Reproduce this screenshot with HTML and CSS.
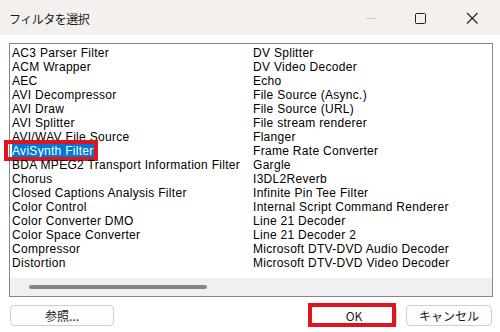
FILE: index.html
```html
<!DOCTYPE html>
<html lang="ja">
<head>
<meta charset="utf-8">
<link rel="stylesheet" href="styles.css">
</head>
<body>
<div class="window">
  <div class="titlebar">
    <span class="title">フィルタを選択</span>
    <div class="controls">
      <svg class="ctl" width="46" height="35" viewBox="0 0 46 35"><line x1="18" y1="18.5" x2="28" y2="18.5" stroke="#c9c9c9" stroke-width="1"/></svg>
      <svg class="ctl" width="46" height="35" viewBox="0 0 46 35"><rect x="16.5" y="13.5" width="10" height="10" rx="1" fill="none" stroke="#222" stroke-width="1"/></svg>
      <svg class="ctl" width="46" height="35" viewBox="0 0 46 35"><path d="M17 13 L27.5 23.5 M27.5 13 L17 23.5" stroke="#222" stroke-width="1.1"/></svg>
    </div>
  </div>
  <div class="body">
    <div class="listbox">
      <div class="list">
        <div class="item">AC3 Parser Filter</div>
        <div class="item">ACM Wrapper</div>
        <div class="item">AEC</div>
        <div class="item">AVI Decompressor</div>
        <div class="item">AVI Draw</div>
        <div class="item">AVI Splitter</div>
        <div class="item">AVI/WAV File Source</div>
        <div class="item"><span class="sel">AviSynth Filter</span><span class="mark mark-sel"></span></div>
        <div class="item">BDA MPEG2 Transport Information Filter</div>
        <div class="item">Chorus</div>
        <div class="item">Closed Captions Analysis Filter</div>
        <div class="item">Color Control</div>
        <div class="item">Color Converter DMO</div>
        <div class="item">Color Space Converter</div>
        <div class="item">Compressor</div>
        <div class="item">Distortion</div>
        <div class="item">DV Splitter</div>
        <div class="item">DV Video Decoder</div>
        <div class="item">Echo</div>
        <div class="item">File Source (Async.)</div>
        <div class="item">File Source (URL)</div>
        <div class="item">File stream renderer</div>
        <div class="item">Flanger</div>
        <div class="item">Frame Rate Converter</div>
        <div class="item">Gargle</div>
        <div class="item">I3DL2Reverb</div>
        <div class="item">Infinite Pin Tee Filter</div>
        <div class="item">Internal Script Command Renderer</div>
        <div class="item">Line 21 Decoder</div>
        <div class="item">Line 21 Decoder 2</div>
        <div class="item">Microsoft DTV-DVD Audio Decoder</div>
        <div class="item">Microsoft DTV-DVD Video Decoder</div>
      </div>
      <div class="hscroll"><div class="thumb"></div></div>
    </div>
    <div class="buttons">
      <button class="btn">参照...</button>
      <div class="spacer"></div>
      <button class="btn btn-ok">OK<span class="mark mark-ok"></span></button>
      <button class="btn">キャンセル</button>
    </div>
  </div>
</div>
</body>
</html>
```
FILE: styles.css
```css
* { box-sizing: border-box; }
html, body { margin: 0; padding: 0; }
body {
  width: 500px;
  height: 332px;
  overflow: hidden;
  background: #ffffff;
  font-family: "Liberation Sans", Arial, "Noto Sans CJK JP", sans-serif;
}
.window {
  width: 500px;
  height: 332px;
  display: flex;
  flex-direction: column;
  background: #fff;
}
.titlebar {
  height: 35px;
  background: #f3f0ed;
  display: flex;
  align-items: center;
  justify-content: space-between;
  padding-left: 9px;
  flex: none;
}
.title {
  font-family: "Noto Sans CJK JP", sans-serif;
  font-size: 12px;
  letter-spacing: -0.5px;
  color: #1a1a1a;
  margin-top: 1px;
}
.controls {
  display: flex;
  margin-right: 4px;
}
.ctl { display: block; margin-left: 5px; }
.body {
  flex: 1;
  display: flex;
  flex-direction: column;
  padding: 8px 7px 0 9px;
}
.listbox {
  height: 254px;
  border: 1px solid #82878f;
  display: flex;
  flex-direction: column;
}
.list {
  height: 234px;
  padding: 2px 0 0 2px;
  display: grid;
  grid-template-rows: repeat(16, 14px);
  grid-auto-flow: column;
  grid-auto-columns: 241px;
  align-content: start;
}
.item {
  font-size: 12px;
  line-height: 14px;
  height: 14px;
  color: #000;
  white-space: nowrap;
  letter-spacing: 0.3px;
  position: relative;
}
.sel {
  background: #0078d7;
  color: #fff;
  display: inline-block;
  padding-right: 2px;
}
.hscroll {
  height: 18px;
  background: #f0f0f0;
  display: flex;
  align-items: center;
  padding-left: 19px;
}
.thumb {
  width: 178px;
  height: 4px;
  background: #858585;
  border-radius: 2px;
}
.buttons {
  display: flex;
  align-items: center;
  padding-top: 8px;
  padding-right: 1px;
}
.spacer { flex: 1; }
.btn {
  font-family: "Noto Sans CJK JP", sans-serif;
  font-size: 12px;
  height: 21px;
  width: 86px;
  padding: 0;
  border: 1px solid #d0d0d0;
  border-radius: 4px;
  background: #fdfdfd;
  color: #1a1a1a;
  line-height: 19px;
  position: relative;
}
.btn:first-child { width: 104px; margin-left: 1px; }
.btn-ok { margin-right: 9px; }
.mark {
  position: absolute;
  border: 4px solid #e0141e;
  pointer-events: none;
}
.mark-sel {
  left: -8px;
  top: -4px;
  width: 94px;
  height: 21px;
}
.mark-ok {
  left: -4px;
  top: -3px;
  width: 88px;
  height: 24px;
}
```
